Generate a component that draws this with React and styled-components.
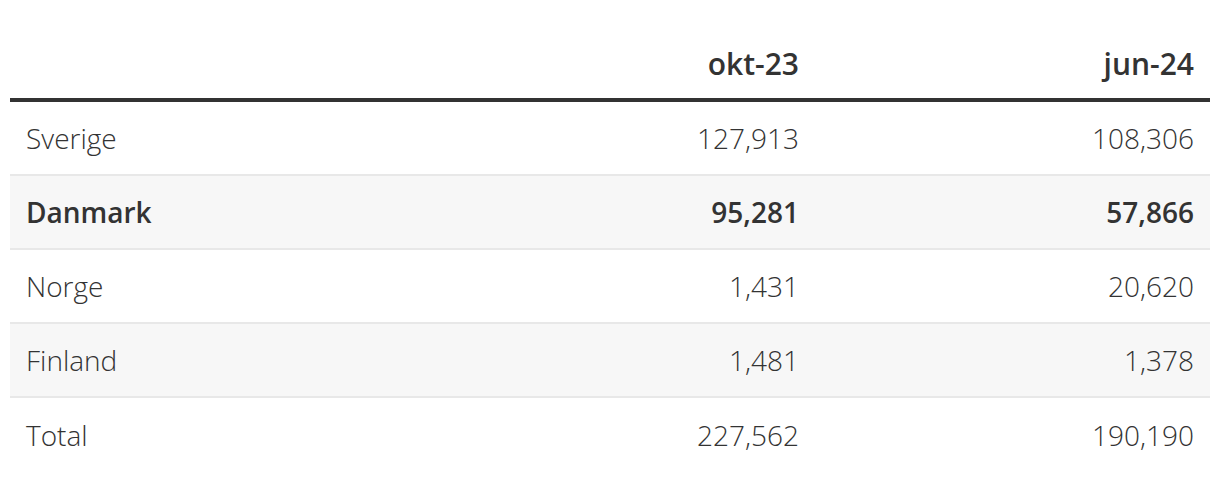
import React from 'react'
import styled, {createGlobalStyle} from 'styled-components'

const Global = createGlobalStyle`
  body {
    margin: 0;
    background: #ffffff;
    font-family: "Open Sans", "Liberation Sans", sans-serif;
    color: #333333;
  }
`

const Wrapper = styled.div`
  padding: 10px 10px 0 10px;
`

const Table = styled.div`
  display: grid;
  grid-template-columns: 410px 395px 395px;
  width: 1200px;
`

const HeadCell = styled.div`
  height: 92px;
  box-sizing: border-box;
  display: flex;
  align-items: flex-end;
  justify-content: ${p => p.$left ? 'flex-start' : 'flex-end'};
  padding: 0 16px 14px 16px;
  font-size: 30px;
  font-weight: 600;
  color: #333333;
  border-bottom: 4px solid #333333;
`

const Cell = styled.div`
  height: 74px;
  box-sizing: border-box;
  display: flex;
  align-items: center;
  justify-content: ${p => p.$left ? 'flex-start' : 'flex-end'};
  padding: 0 16px;
  font-size: 28px;
  font-weight: ${p => p.$bold ? 600 : 300};
  color: #333333;
  background: ${p => p.$shade ? '#f7f7f7' : '#ffffff'};
  border-bottom: ${p => p.$last ? 'none' : '2px solid #e8e8e8'};
`

const rows = [
  ['Sverige', '127,913', '108,306'],
  ['Danmark', '95,281', '57,866', true],
  ['Norge', '1,431', '20,620'],
  ['Finland', '1,481', '1,378'],
  ['Total', '227,562', '190,190'],
]

export default function App() {
  return (
    <Wrapper>
      <Global />
      <Table>
        <HeadCell $left></HeadCell>
        <HeadCell>okt-23</HeadCell>
        <HeadCell>jun-24</HeadCell>
        {rows.map((r, i) => (
          <React.Fragment key={r[0]}>
            {r.slice(0, 3).map((v, j) => (
              <Cell
                key={j}
                $left={j === 0}
                $bold={r[3]}
                $shade={i % 2 === 1}
                $last={i === rows.length - 1}
              >
                {v}
              </Cell>
            ))}
          </React.Fragment>
        ))}
      </Table>
    </Wrapper>
  )
}
